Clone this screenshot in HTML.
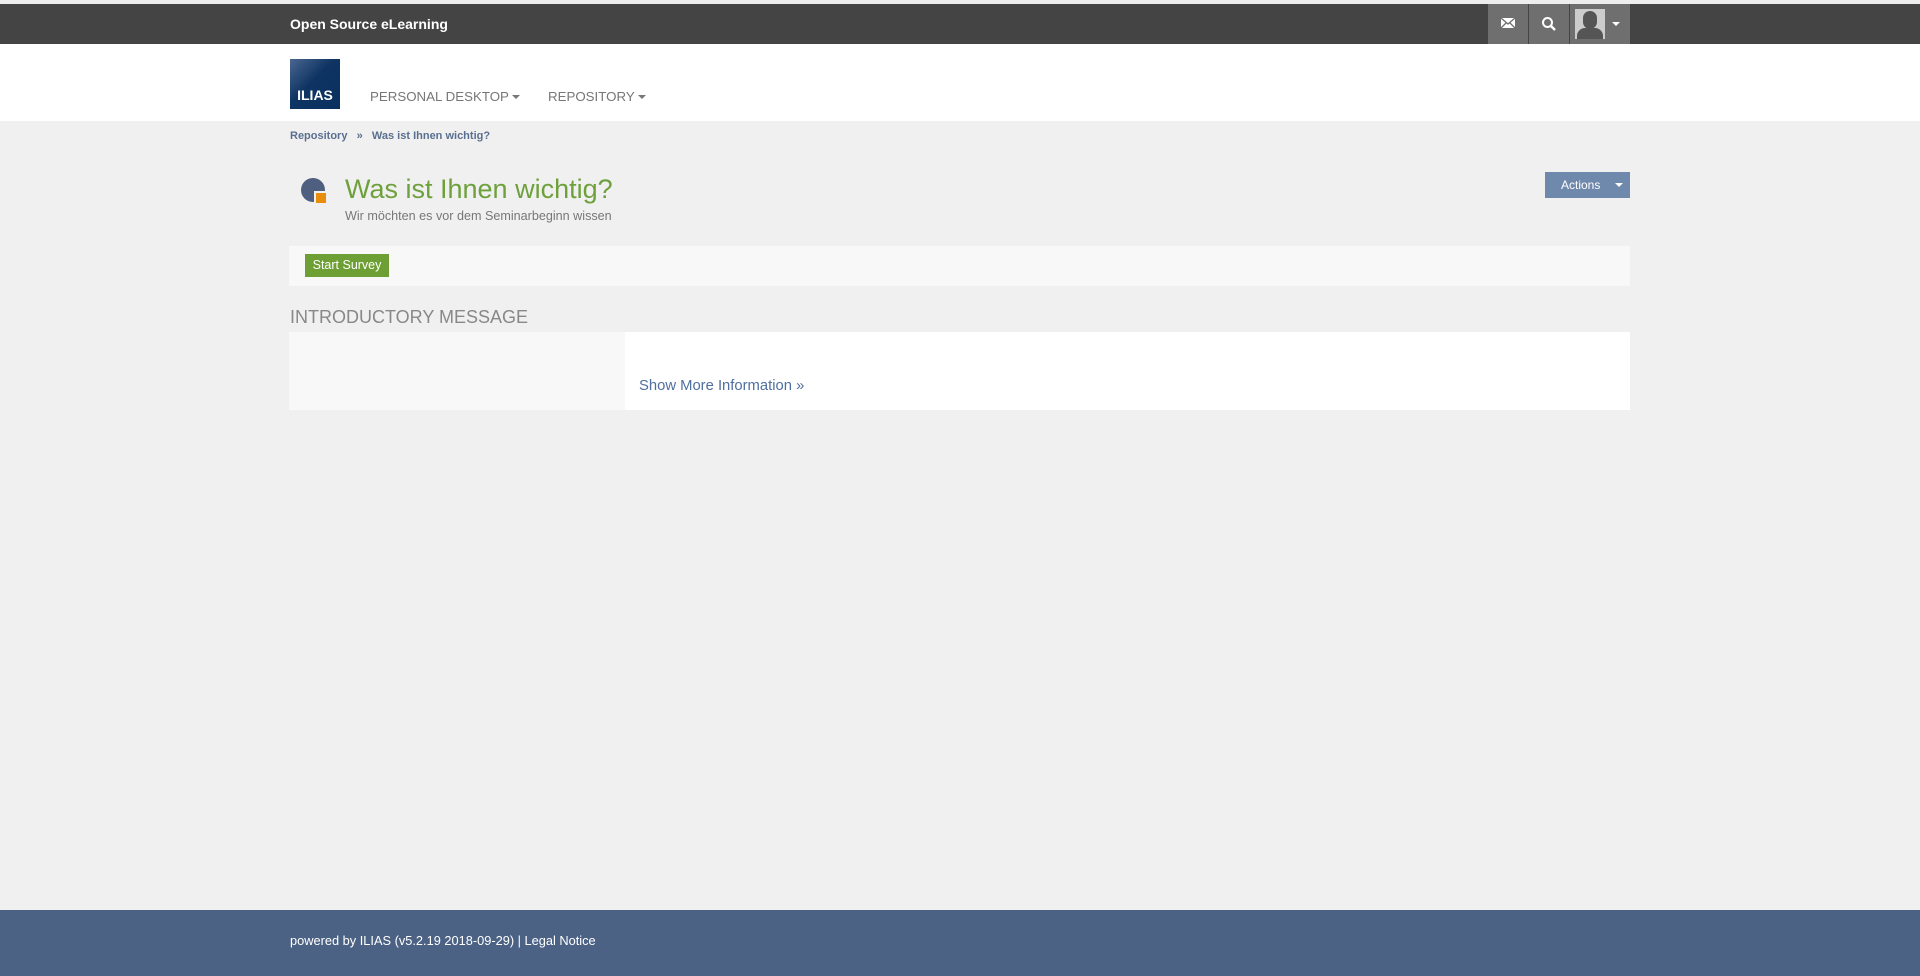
<!DOCTYPE html>
<html><head><meta charset="utf-8"><style>
*{margin:0;padding:0;box-sizing:border-box}
body{width:1920px;height:976px;background:#f0f0f0;font-family:"Liberation Sans",sans-serif;position:relative;overflow:hidden}
.abs{position:absolute}
</style></head><body>
<div class="abs" style="left:0;top:0;width:1920px;height:4px;background:#eee"></div>
<div class="abs" style="left:0;top:4px;width:1920px;height:40px;background:#444"></div>
<div class="abs" style="left:290px;top:16px;color:#fff;font-weight:bold;font-size:14px">Open Source eLearning</div>
<div class="abs" style="left:1488px;top:4px;width:40px;height:40px;background:#6f6f6f"></div>
<div class="abs" style="left:1529px;top:4px;width:40px;height:40px;background:#6f6f6f"></div>
<div class="abs" style="left:1570px;top:4px;width:60px;height:40px;background:#6f6f6f"></div>
<svg class="abs" style="left:1500px;top:17px" width="16" height="12" viewBox="0 0 16 12"><rect x="1" y="1" width="14" height="10" fill="#fff"/><path d="M1 1 L8 7 L15 1 M1 11 L6 6 M15 11 L10 6" stroke="#6f6f6f" stroke-width="1.3" fill="none"/></svg>
<svg class="abs" style="left:1541px;top:16px" width="16" height="16" viewBox="0 0 16 16"><circle cx="6.5" cy="6.5" r="4.5" stroke="#fff" stroke-width="2" fill="none"/><path d="M10 10 L14 14" stroke="#fff" stroke-width="2.5"/></svg>
<div class="abs" style="left:1575px;top:9px;width:30px;height:30px;background:#ccc;overflow:hidden">
<div class="abs" style="left:8px;top:2px;width:14px;height:18px;border-radius:7px;background:#555"></div>
<div class="abs" style="left:2px;top:19px;width:26px;height:14px;border-radius:8px 8px 0 0;background:#555"></div></div>
<div class="abs" style="left:1612px;top:22px;border-left:4px solid transparent;border-right:4px solid transparent;border-top:4px solid #fff"></div>
<div class="abs" style="left:0;top:44px;width:1920px;height:77px;background:#fff"></div>
<div class="abs" style="left:290px;top:59px;width:50px;height:50px;background:linear-gradient(135deg,#4a6690 0%,#0e3463 45%,#0a3060 100%);color:#fff;font-weight:bold;font-size:14px;padding-top:28px;text-align:center">ILIAS</div>
<div class="abs" style="left:370px;top:89px;color:#777;font-size:13.3px">PERSONAL DESKTOP <span style="display:inline-block;vertical-align:middle;border-left:4px solid transparent;border-right:4px solid transparent;border-top:4px solid #777"></span></div>
<div class="abs" style="left:548px;top:89px;color:#777;font-size:13.3px">REPOSITORY <span style="display:inline-block;vertical-align:middle;border-left:4px solid transparent;border-right:4px solid transparent;border-top:4px solid #777"></span></div>
<div class="abs" style="left:290px;top:130px;color:#5a6f8f;font-size:11px;font-weight:bold">Repository &nbsp;&nbsp;»&nbsp;&nbsp; Was ist Ihnen wichtig?</div>
<svg class="abs" style="left:301px;top:178px" width="26" height="26" viewBox="0 0 26 26"><circle cx="12" cy="12" r="12" fill="#4f5f7f"/><rect x="13" y="13" width="13" height="13" fill="#f0f0f0"/><rect x="15" y="15" width="10" height="10" fill="#e98e0c"/></svg>
<div class="abs" style="left:345px;top:174px;color:#6ea03c;font-size:27px">Was ist Ihnen wichtig?</div>
<div class="abs" style="left:345px;top:209px;color:#777;font-size:12.6px">Wir möchten es vor dem Seminarbeginn wissen</div>
<div class="abs" style="left:1545px;top:172px;width:85px;height:26px;background:#6f89ad;color:#fff;font-size:12px;line-height:26px;padding-left:16px">Actions</div>
<div class="abs" style="left:1615px;top:183px;border-left:4px solid transparent;border-right:4px solid transparent;border-top:4px solid #fff"></div>
<div class="abs" style="left:289px;top:246px;width:1341px;height:40px;background:#f8f8f8"></div>
<div class="abs" style="left:305px;top:254px;width:84px;height:23px;background:#6e9f35;color:#fff;font-size:12.5px;line-height:23px;text-align:center">Start Survey</div>
<div class="abs" style="left:290px;top:307px;color:#888;font-size:18px">INTRODUCTORY MESSAGE</div>
<div class="abs" style="left:289px;top:332px;width:336px;height:78px;background:#f8f8f8"></div>
<div class="abs" style="left:625px;top:332px;width:1005px;height:78px;background:#fff"></div>
<div class="abs" style="left:639px;top:378px;color:#4f6f9f;font-size:14.8px">Show More Information »</div>
<div class="abs" style="left:0;top:910px;width:1920px;height:66px;background:#4b6285"></div>
<div class="abs" style="left:290px;top:933px;color:#fff;font-size:12.8px">powered by ILIAS (v5.2.19 2018-09-29) | Legal Notice</div>
</body></html>
